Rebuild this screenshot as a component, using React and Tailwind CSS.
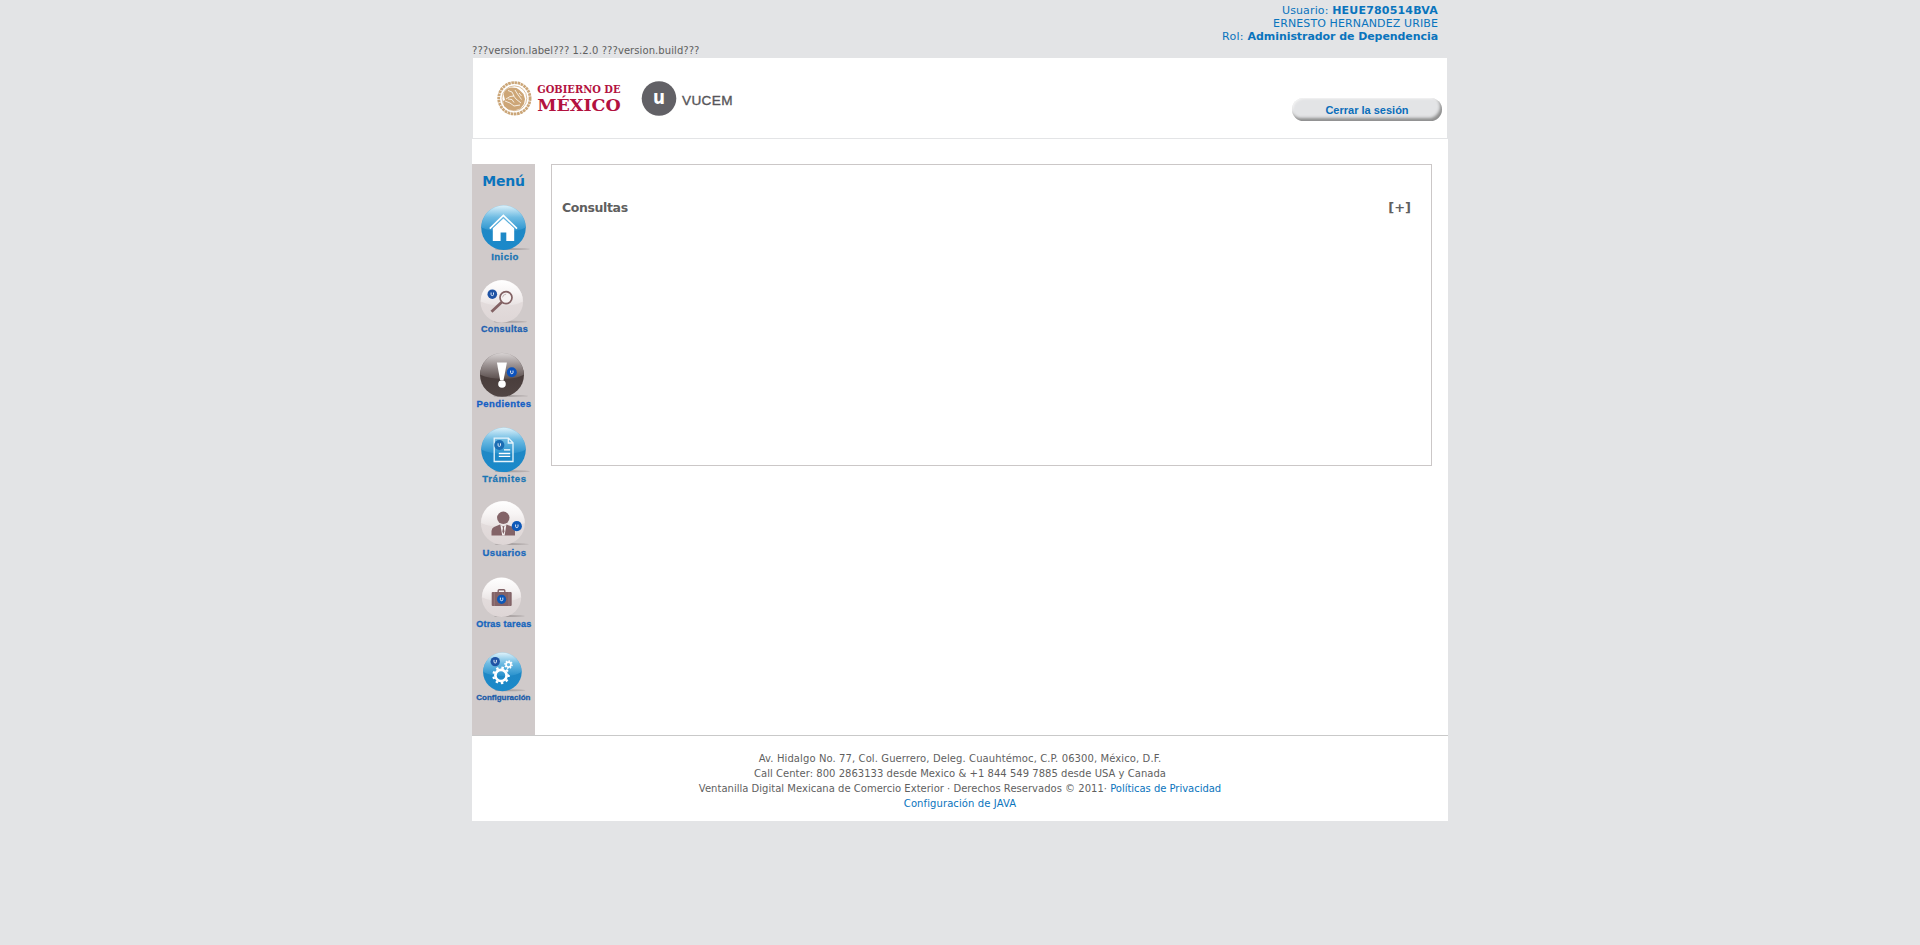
import React from "react";

const LABEL = "'Liberation Sans', Arial, sans-serif";

function Shade() {
  return (
    <defs>
      <linearGradient id="blue" x1="0" y1="0" x2="0" y2="1">
        <stop offset="0" stopColor="#9fd5ee" />
        <stop offset="0.5" stopColor="#1f88c5" />
        <stop offset="1" stopColor="#1a89ca" />
      </linearGradient>
      <linearGradient id="blueGloss" x1="0" y1="0" x2="0" y2="1">
        <stop offset="0" stopColor="#dcf1fa" />
        <stop offset="0.45" stopColor="#6fbce3" />
        <stop offset="1" stopColor="#2791cd" />
      </linearGradient>
      <linearGradient id="light" x1="0" y1="0" x2="0" y2="1">
        <stop offset="0" stopColor="#f2eeee" />
        <stop offset="0.5" stopColor="#e3dcdc" />
        <stop offset="1" stopColor="#ded6d6" />
      </linearGradient>
      <linearGradient id="lightGloss" x1="0" y1="0" x2="0" y2="1">
        <stop offset="0" stopColor="#ffffff" />
        <stop offset="0.5" stopColor="#f7f4f4" />
        <stop offset="1" stopColor="#e8e2e2" />
      </linearGradient>
      <linearGradient id="dark" x1="0" y1="0" x2="0" y2="1">
        <stop offset="0" stopColor="#b5afaf" />
        <stop offset="0.5" stopColor="#483c3b" />
        <stop offset="1" stopColor="#514543" />
      </linearGradient>
      <linearGradient id="darkGloss" x1="0" y1="0" x2="0" y2="1">
        <stop offset="0" stopColor="#d8d3d3" />
        <stop offset="0.5" stopColor="#968d8d" />
        <stop offset="1" stopColor="#5c504f" />
      </linearGradient>
      <linearGradient id="shadow" x1="0" y1="0" x2="1" y2="0">
        <stop offset="0" stopColor="#9b9494" />
        <stop offset="1" stopColor="#9b9494" stopOpacity="0.4" />
      </linearGradient>
    </defs>
  );
}

const BALLS = {
  blue: ["url(#blue)", "url(#blueGloss)"],
  light: ["url(#light)", "url(#lightGloss)"],
  dark: ["url(#dark)", "url(#darkGloss)"],
};

function Ball({ kind, cx, cy, r }) {
  const [body, gloss] = BALLS[kind];
  const w = r * 0.99;
  const d = `M${cx - w} ${cy} A${w} ${w} 0 0 1 ${cx + w} ${cy} Q${cx + r * 0.6} ${cy + 4.5} ${cx} ${cy + 4} Q${cx - r * 0.6} ${cy + 4} ${cx - w} ${cy}Z`;
  return (
    <>
      <ellipse cx={cx + r * 0.4} cy={cy + r - 0.9} rx={r * 0.78} ry="1" fill="url(#shadow)" />
      <circle cx={cx} cy={cy} r={r} fill={body} />
      <path d={d} fill={gloss} />
    </>
  );
}

function Badge({ cx, cy, r, fill = "#0d58b8" }) {
  return (
    <>
      <circle cx={cx} cy={cy} r={r} fill={fill} />
      <path d={`M${cx - 1.2} ${cy - 1.7}v2q0 1.100 1.200 1.100t1.200-1.100v-2`} fill="none" stroke="#dfe9f6" strokeWidth="1" />
    </>
  );
}

function MenuItem({ top, height, label, x, width, y, size, color, children }) {
  return (
    <a className="block">
      <svg className="block" width="63" height={height} viewBox={`0 ${top} 63 ${height}`}>
        {children}
        <text x={x} y={y} textLength={width} fontFamily={LABEL} fontWeight="700" fontSize={size} fill={color} stroke={color} strokeWidth="0.3">
          {label}
        </text>
      </svg>
    </a>
  );
}

function Gear({ cx, cy, r, tooth, width, teeth }) {
  return (
    <g fill="none" stroke="#fff">
      <circle cx={cx} cy={cy} r={r} strokeWidth={width} />
      {Array.from({ length: teeth }, (_, i) => (
        <path key={i} d={`M${cx} ${cy - r - width / 2 + 0.4}v-${tooth}`} strokeWidth={tooth * 1.15} transform={`rotate(${(i * 360) / teeth + 12} ${cx} ${cy})`} />
      ))}
    </g>
  );
}

function Sidebar() {
  return (
    <nav className="h-[571px] w-[63px] shrink-0 bg-[#d0caca]">
      <h2 className="h-9 pt-[7px] text-center text-[14px] leading-5 font-bold tracking-[-0.2px] text-[#0a74bd]">Menú</h2>
      <MenuItem top={200} height={72} label="Inicio" x={19.3} width={27} y={260} size={9.6} color="#1b76b4">
        <Ball kind="blue" cx={31.5} cy={227.6} r={22.3} />
        <path d="M17.8 228.7 31.4 215.4 45 228.7" fill="none" stroke="#fff" strokeWidth="1.7" />
        <path d="M20.8 228.3 31.4 218.4 42.2 228.3V240.9H34.3V232.6H28.6V240.9H20.8Z" fill="#fff" />
      </MenuItem>
      <MenuItem top={272} height={72} label="Consultas" x={8.9} width={46.8} y={332.4} size={9} color="#1b5fb0">
        <Ball kind="light" cx={29.8} cy={301.4} r={21.3} />
        <path d="M19.5 311.8 29.6 302.2" stroke="#836264" strokeWidth="2.8" />
        <path d="M28.8 302.8 31 300.7" stroke="#836264" strokeWidth="1.3" />
        <circle cx="34" cy="297.6" r="6" fill="#f6f2f2" stroke="#836264" strokeWidth="1.7" />
        <path d="M30.5 297.4q.5-3 3.7-3.3" fill="none" stroke="#b8a6a7" strokeWidth=".8" />
        <Badge cx={20.3} cy={294.2} r={4.8} fill="#1f53a4" />
      </MenuItem>
      <MenuItem top={344} height={74} label="Pendientes" x={4.6} width={54.4} y={407.4} size={9.5} color="#1560c4">
        <Ball kind="dark" cx={30} cy={374.8} r={22} />
        <path d="M24.9 362.4H34.9L31.6 380H28.1Z" fill="#fff" />
        <circle cx="30" cy="384" r="3.8" fill="#fff" />
        <Badge cx={39.8} cy={372.3} r={5} fill="#0b52bd" />
      </MenuItem>
      <MenuItem top={418} height={74} label="Trámites" x={10.2} width={43.8} y={481.6} size={9.6} color="#1b76b4">
        <Ball kind="blue" cx={31.5} cy={449.8} r={22.3} />
        <path d="M22.2 438.2H36.5L41 442.8V461.5H22.2ZM36.3 438.2V443H41" fill="none" stroke="#e6f4fb" strokeWidth="1.3" />
        <path d="M32 449.8h6.2M26.8 453.5H38.2M26.8 456.4H38.2" stroke="#fff" strokeWidth="1.3" />
        <Badge cx={27.3} cy={445} r={5.1} fill="#1b6cb3" />
      </MenuItem>
      <MenuItem top={492} height={74} label="Usuarios" x={10.4} width={43.8} y={555.800} size={9.6} color="#1b69bc">
        <Ball kind="light" cx={30.9} cy={523} r={22} />
        <circle cx="31.3" cy="517.8" r="6.2" fill="#836367" />
        <path d="M19.5 535.4V531Q19.8 528.2 22 527L28 524.6Q31.5 528 34.7 524.6L40.8 527Q42.8 528.2 43 531V535.4Z" fill="#836367" />
        <path d="M28.4 524.5 31.4 527.2 34.4 524.5 32.600 535.4H30.200Z" fill="#f2eeee" />
        <path d="M30.6 526.6h1.6l-.3 1.800.6 3-1.100 2.600-1.100-2.600.6-3Z" fill="#836367" />
        <Badge cx={44.8} cy={526.2} r={5.1} />
      </MenuItem>
      <MenuItem top={566} height={74} label="Otras tareas" x={4.2} width={55} y={627.4} size={9} color="#1565bd">
        <Ball kind="light" cx={29.5} cy={597.2} r={19.7} />
        <path d="M26.2 592.3V590.8Q26.2 589.8 27.2 589.8H31.8Q32.8 589.8 32.8 590.8V592.3" fill="none" stroke="#836367" strokeWidth="1.4" />
        <rect x="19.7" y="592" width="20" height="14" rx="1" fill="#836367" />
        <path d="M22.3 592v14M37 592v14" stroke="#a08689" strokeWidth=".6" />
        <Badge cx={29.6} cy={599.3} r={4.6} />
      </MenuItem>
      <MenuItem top={640} height={80} label="Configuración" x={4.3} width={54.2} y={700.2} size={8} color="#1b5ba9">
        <Ball kind="blue" cx={30.4} cy={671.9} r={19.3} />
        <Gear cx={29} cy={675.4} r={5.6} tooth={2.2} width={2.7} teeth={9} />
        <Gear cx={36.5} cy={664.6} r={2.5} tooth={1.4} width={1.6} teeth={8} />
        <Badge cx={23.2} cy={661.6} r={4.7} fill="#1f53a4" />
      </MenuItem>
    </nav>
  );
}

function Logos() {
  return (
    <svg className="block" width="250" height="80" viewBox="485 58 250 80">
      <g fill="none" stroke="#cba678">
        <circle cx="514.4" cy="98.3" r="15.7" strokeWidth="2.800" strokeDasharray="2.6 .6" />
        <circle cx="514.4" cy="98.3" r="12.4" strokeWidth=".7" />
      </g>
      <g fill="#cda677">
        <path d="M503.500 94q2-6 8-6.500l5 .4 3 2 4 4 1.500 5-1 5-3.500 4.500-6 2-6-.8-4.500-3.500-1-5 2-1Z" />
      </g>
      <path d="M508 90.500l4 1.500 2 4-4 .5-4 2.500M515 90l2.500 4 4 5.500M513 95l3 4 5 4M505 101l5 2 4 3 6-1M508 99l4 .5 2 3M519 93l2.500 3" fill="none" stroke="#fbf5ec" strokeWidth=".9" />
      <g fontFamily="'DejaVu Serif', serif" fontWeight="700" fill="#b3123f">
        <text x="537.2" y="92.900" fontSize="10.8" textLength="83.300" lengthAdjust="spacingAndGlyphs">GOBIERNO DE</text>
        <text x="537.2" y="110.600" fontSize="16.4" textLength="83.500" lengthAdjust="spacingAndGlyphs">MÉXICO</text>
      </g>
      <circle cx="659" cy="98.500" r="17.300" fill="#626166" />
      <text x="659" y="104.300" textAnchor="middle" fontFamily="'DejaVu Sans', sans-serif" fontWeight="700" fontSize="19" textLength="12" lengthAdjust="spacingAndGlyphs" fill="#fff">u</text>
      <text x="682" y="104.800" textLength="50.500" fontFamily={LABEL} fontSize="13.600" fill="#57565a" stroke="#57565a" strokeWidth=".35">VUCEM</text>
    </svg>
  );
}

export default function App() {
  return (
    <div className="min-h-[945px] bg-[#e3e4e6] font-['Verdana','DejaVu_Sans',sans-serif] text-[#5f5f5f]">
      <div className="mx-auto w-[976px]">
        <div className="h-[44px] pt-[4px] pr-[10px] text-right text-[11px] leading-[13px] text-[#0a74bd]">
          <p><span className="tracking-[0.14px]">Usuario: </span><b className="tracking-[0.19px]">HEUE780514BVA</b></p>
          <p className="tracking-[0.11px]">ERNESTO HERNANDEZ URIBE</p>
          <p><span className="tracking-[0.3px]">Rol: </span><b className="tracking-[-0.07px]">Administrador de Dependencia</b></p>
        </div>
        <p className="h-[14px] text-[10px] leading-[13px] tracking-[0.08px]">???version.label??? 1.2.0 ???version.build???</p>
        <header className="mx-px flex h-[80px] justify-between bg-white pr-[5px] pl-3">
          <Logos />
          <button className="mt-10 h-[23px] w-[150px] rounded-full bg-[#e3e4e6] pt-px font-['Liberation_Sans',Arial,sans-serif] text-[11px] leading-[22px] font-bold text-[#0a6dba] shadow-[inset_-2px_-3px_3px_#909090,inset_1px_1px_2px_#f3f3f3]">
            Cerrar la sesión
          </button>
        </header>
        <div className="mt-px bg-white pt-[25px]">
          <div className="flex">
            <Sidebar />
            <main className="ml-4 flex h-[302px] w-[881px] justify-between border border-[#cbc7c7] pt-[34px] pr-5 pl-[10px] leading-[18px] font-bold">
              <h1 className="text-[12.5px] tracking-[-0.38px]">Consultas</h1>
              <span className="text-[13px]">[+]</span>
            </main>
          </div>
          <footer className="h-[86px] border-t border-[#c9c9c9] pt-[15px] text-center text-[10px] leading-[15px]">
            <p className="tracking-[0.1px]">Av. Hidalgo No. 77, Col. Guerrero, Deleg. Cuauhtémoc, C.P. 06300, México, D.F.</p>
            <p className="tracking-[0.03px]">Call Center: 800 2863133 desde Mexico &amp; +1 844 549 7885 desde USA y Canada</p>
            <p><span className="tracking-[0.015px]">Ventanilla Digital Mexicana de Comercio Exterior · Derechos Reservados © 2011· </span><a className="tracking-[-0.03px] text-[#0a74bd]">Políticas de Privacidad</a></p>
            <p><a className="tracking-[0.1px] text-[#0a74bd]">Configuración de JAVA</a></p>
          </footer>
        </div>
      </div>
      <svg className="absolute" width="0" height="0"><Shade /></svg>
    </div>
  );
}
